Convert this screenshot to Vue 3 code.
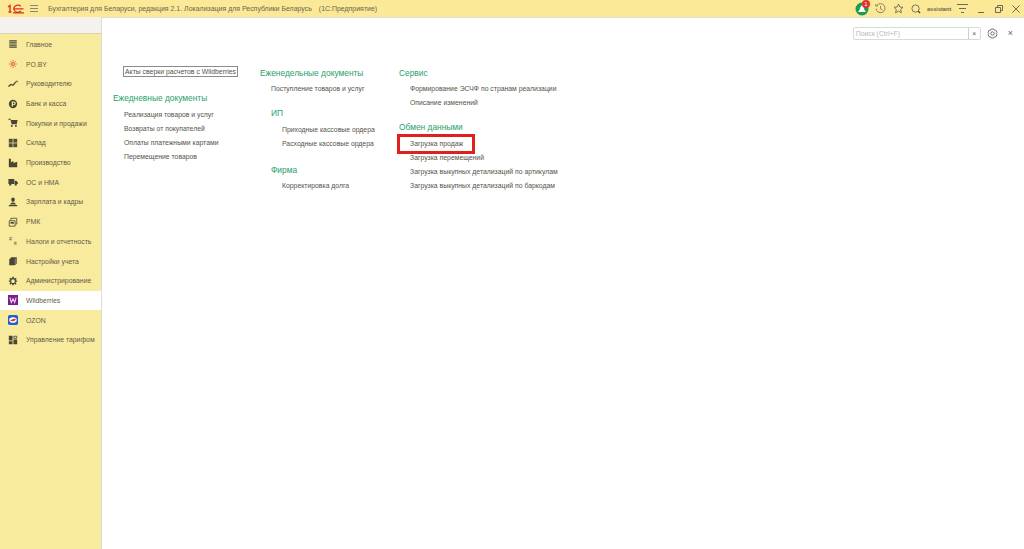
<template>
  <div class="app">
    <header class="topbar">
      <svg class="logo" width="17" height="10" viewBox="0 0 17 10">
        <path d="M1 3 L3 1.5 V8 M1.5 8 H4.5" fill="none" stroke="#d9331f" stroke-width="1.4" />
        <path d="M14 2.4 A4.2 3.4 0 1 0 14 7 M7 4.8 H16.5 M6 8.8 H17" fill="none" stroke="#d9331f" stroke-width="1.2" />
      </svg>
      <svg class="burger" width="8" height="7" viewBox="0 0 8 7">
        <path d="M0 .5H8M0 3.5H8M0 6.5H8" stroke="#8a8570" stroke-width="1" />
      </svg>
      <span class="app-title">Бухгалтерия для Беларуси, редакция 2.1. Локализация для Республики Беларусь</span>
      <span class="app-kind">(1С:Предприятие)</span>
      <div class="top-right">
        <div class="badge-wrap">
          <svg width="14" height="14" viewBox="0 0 14 14">
            <circle cx="7" cy="7" r="6.5" fill="#1f9a4c" />
            <path d="M7 3 L9.5 6.5 H8.6 L11 10 H3 L5.4 6.5 H4.5 Z" fill="#fff" />
          </svg>
          <span class="badge">1</span>
        </div>
        <svg class="t1" width="11" height="11" viewBox="0 0 11 11" fill="none" stroke="#7d7863" stroke-width=".9">
          <path d="M1.8 2.6 A4.5 4.5 0 1 1 1 5.5 M.8 1 V3 H2.8 M5.5 3 V5.8 L7.5 7" />
        </svg>
        <svg class="t2" width="11" height="11" viewBox="0 0 11 11" fill="none" stroke="#6e6955" stroke-width=".9">
          <path d="M5.5 1 L6.9 4 L10 4.3 L7.7 6.5 L8.4 9.8 L5.5 8.1 L2.6 9.8 L3.3 6.5 L1 4.3 L4.1 4 Z" />
        </svg>
        <svg class="t3" width="10" height="10" viewBox="0 0 11 11" fill="none" stroke="#6e6955">
          <circle cx="5" cy="5" r="4" />
          <path d="M8 8 L10 10" stroke-width="1.5" stroke="#4f4b3c" />
        </svg>
        <span class="user">assistant</span>
        <svg class="t4" width="11" height="9" viewBox="0 0 11 9">
          <path d="M0 .5H11M2 4.5H9M4 8.5H7" stroke="#6e6955" />
        </svg>
        <svg class="t5" width="7" height="8" viewBox="0 0 7 8">
          <path d="M0 7.5H6" stroke="#6e6955" />
        </svg>
        <svg class="t6" width="8" height="8" viewBox="0 0 8 8" fill="none" stroke="#6e6955">
          <path d="M.5 2.5H5.5V7.5H.5Z M2.5 2.5V.5H7.5V5.5H5.5" />
        </svg>
        <svg class="t7" width="8" height="8" viewBox="0 0 8 8">
          <path d="M.5 .5L7.5 7.5M7.5 .5L.5 7.5" stroke="#6e6955" />
        </svg>
      </div>
    </header>

    <div class="body">
      <aside class="sidebar">
        <div class="sidebar-top"></div>
        <nav class="nav">
          <div v-for="item in navItems" :key="item.label" class="nav-item" :class="{ active: item.active }">
            <svg class="nav-icon" width="10" height="10" viewBox="0 0 12 12">
              <path v-for="(s, i) in item.shapes" :key="i" :d="s.d" :fill="s.fill || 'none'" :stroke="s.stroke || 'none'" :stroke-width="s.width || 1" />
            </svg>
            <span>{{ item.label }}</span>
          </div>
        </nav>
      </aside>

      <main class="panel">
        <div class="search-row">
          <div class="search">
            <span class="search-text">Поиск (Ctrl+F)</span>
            <span class="search-clear">×</span>
          </div>
          <svg class="gear" width="11" height="11" viewBox="0 0 11 11" fill="none" stroke="#707070" stroke-linejoin="round">
            <path d="M4.3 1 H6.7 L7.4 2.2 L8.8 2.2 L10 4.3 L9.3 5.5 L10 6.7 L8.8 8.8 L7.4 8.8 L6.7 10 H4.3 L3.6 8.8 L2.2 8.8 L1 6.7 L1.7 5.5 L1 4.3 L2.2 2.2 L3.6 2.2 Z" />
            <circle cx="5.5" cy="5.5" r="1.7" />
          </svg>
          <span class="panel-close">×</span>
        </div>

        <div class="columns">
          <section class="col col-1">
            <div class="focus-link">Акты сверки расчетов с Wildberries</div>
            <h3>Ежедневные документы</h3>
            <ul>
              <li>Реализация товаров и услуг</li>
              <li>Возвраты от покупателей</li>
              <li>Оплаты платежными картами</li>
              <li>Перемещение товаров</li>
            </ul>
          </section>

          <section class="col col-2">
            <h3>Еженедельные документы</h3>
            <ul class="flat">
              <li>Поступление товаров и услуг</li>
            </ul>
            <h3 class="sub ip">ИП</h3>
            <ul class="low">
              <li>Приходные кассовые ордера</li>
              <li>Расходные кассовые ордера</li>
            </ul>
            <h3 class="sub firm">Фирма</h3>
            <ul>
              <li>Корректировка долга</li>
            </ul>
          </section>

          <section class="col col-3">
            <h3>Сервис</h3>
            <ul>
              <li>Формирование ЭСЧФ по странам реализации</li>
              <li>Описание изменений</li>
            </ul>
            <h3 class="exchange">Обмен данными</h3>
            <ul class="low">
              <li class="marked">Загрузка продаж</li>
              <li>Загрузка перемещений</li>
              <li>Загрузка выкупных детализаций по артикулам</li>
              <li>Загрузка выкупных детализаций по баркодам</li>
            </ul>
          </section>
        </div>
      </main>
    </div>
  </div>
</template>

<script setup>
const dark = '#4a4636'

const navItems = [
  { label: 'Главное', shapes: [{ d: 'M1.5 1.5H10.5V3H1.5ZM1.5 4H10.5V5.5H1.5ZM1.5 6.5H10.5V8H1.5ZM1.5 9H10.5V10.5H1.5Z', fill: dark }] },
  { label: 'PO.BY', shapes: [{ d: 'M6 1V11M1 6H11M2.5 2.5L9.5 9.5M9.5 2.5L2.5 9.5', stroke: '#e8643a', width: 0.9 }, { d: 'M4.5 6A1.5 1.5 0 1 1 7.5 6A1.5 1.5 0 1 1 4.5 6Z', fill: '#f9eb9d', stroke: '#d9431f', width: 0.8 }] },
  { label: 'Руководителю', shapes: [{ d: 'M.5 9L3.5 6.5L6 7.5L9.5 3.5', stroke: dark, width: 1.5 }, { d: 'M9 2H11.5V4.5Z', fill: dark }] },
  { label: 'Банк и касса', shapes: [{ d: 'M1 6A5 5 0 1 1 11 6A5 5 0 1 1 1 6ZM4.5 3V9H6V7.3H7.2A2.1 2.1 0 0 0 7.2 3Z', fill: dark }, { d: 'M6 4.2H7A1 1 0 0 1 7 6.2H6Z', fill: dark }] },
  { label: 'Покупки и продажи', shapes: [{ d: 'M.5 1H3.2L3.6 2.5H11.5L10.5 7.5H4.3L3 2H.5Z', fill: dark }, { d: 'M3.5 8.5H5.5V10.5H3.5ZM8.5 8.5H10.5V10.5H8.5Z', fill: dark }] },
  { label: 'Склад', shapes: [{ d: 'M1 1H11V11H1Z', fill: dark }, { d: 'M1 6H11M6 1V11', stroke: '#f9eb9d', width: 0.9 }, { d: 'M1 3.5H11M1 8.5H11', stroke: '#8a8468', width: 0.5 }] },
  { label: 'Производство', shapes: [{ d: 'M1 11V1H3.5V5L6.5 3.5V6L11 4.5V11Z', fill: dark }] },
  { label: 'ОС и НМА', shapes: [{ d: 'M.5 2.5H7.5V8.5H.5ZM8 4.5H10L11.8 6.5V8.5H8Z', fill: dark }, { d: 'M1.5 8H4V10.3H1.5ZM8 8H10.5V10.3H8Z', fill: dark }] },
  { label: 'Зарплата и кадры', shapes: [{ d: 'M3.8 3.3A2.2 2.6 0 1 1 8.2 3.3A2.2 2.6 0 1 1 3.8 3.3ZM2 9L4.5 6.5H7.5L10 9ZM1 9.5H11V11H1Z', fill: dark }] },
  { label: 'РМК', shapes: [{ d: 'M1.5 4.5H8.5V11H1.5ZM3.5 4V1.5H10.5V8.5H9', stroke: dark }, { d: 'M3 6H7V8H3Z', fill: dark }] },
  { label: 'Налоги и отчетность', shapes: [{ d: 'M1.5 2H5M3 2V5M1 4.5H5M7 7.5H10.5M8.5 7.5V10M7 9.7H11', stroke: '#6e6a58', width: 0.8 }] },
  { label: 'Настройки учета', shapes: [{ d: 'M1.5 4L4 1.5H10.5V9L8 11H1.5Z', fill: dark }, { d: 'M8 4L10.5 1.5V9L8 11Z', fill: '#7d7860' }] },
  { label: 'Администрирование', shapes: [{ d: 'M5 1H7V2.5L8.3 3L9.4 2L10.5 3.5L9.3 4.5L9.5 5.5H11V7H9.5L9.2 8L10.3 9.2L9 10.4L8 9.3L7 9.6V11H5V9.6L4 9.3L3 10.4L1.7 9.2L2.8 8L2.5 7H1V5.5H2.5L2.7 4.5L1.5 3.5L2.6 2L3.7 3L5 2.5Z', fill: dark }, { d: 'M3.8 6.2A2.2 2.2 0 1 1 8.2 6.2A2.2 2.2 0 1 1 3.8 6.2Z', fill: '#f9eb9d' }] },
  { label: 'Wildberries', active: true, shapes: [{ d: 'M0 0H12V12H0Z', fill: '#7d1b8f' }, { d: 'M2.2 3L4 9L6 4.5L8 9L9.8 3', stroke: '#f3d9f5', width: 1.3 }] },
  { label: 'OZON', shapes: [{ d: 'M2 0H10Q12 0 12 2V10Q12 12 10 12H2Q0 12 0 10V2Q0 0 2 0Z', fill: '#1f5fd0' }, { d: 'M1.5 6A4.5 3.4 0 1 1 10.5 6A4.5 3.4 0 1 1 1.5 6Z', fill: '#fff' }, { d: 'M2.5 7Q6 3.4 9.7 4.8Q8 8.6 2.5 7Z', fill: '#e0322a' }] },
  { label: 'Управление тарифом', shapes: [{ d: 'M1 1H5.5V6.5H1ZM1 7.5H5.5V11H1ZM6.5 5.5H11V11H6.5Z', fill: dark }, { d: 'M7 1.5H10.5V4H7Z', stroke: dark }] }
]
</script>

<style scoped>
.app {
  width: 1024px;
  height: 549px;
  display: flex;
  flex-direction: column;
  overflow: hidden;
  font-family: "Liberation Sans", Arial, sans-serif;
  font-size: 6.85px;
  color: #55534a;
  background: #f9eb9d;
}

.topbar {
  height: 17px;
  flex: none;
  display: flex;
  align-items: center;
  background: #fbe997;
  padding-left: 7px;
}

.logo {
  margin-right: 6px;
}

.burger {
  margin-right: 10px;
}

.app-title {
  color: #6a654f;
  font-size: 6.96px;
  margin-right: 7px;
  white-space: nowrap;
}

.app-kind {
  color: #6a654f;
  font-size: 6.96px;
}

.top-right {
  margin-left: auto;
  display: flex;
  align-items: center;
  padding-right: 4px;
}

.badge-wrap {
  position: relative;
  display: flex;
  margin-right: 5.5px;
}

.badge {
  position: absolute;
  top: -2px;
  right: -1px;
  width: 8px;
  height: 8px;
  border-radius: 50%;
  background: #e0312d;
  color: #fff;
  font-size: 6px;
  line-height: 8px;
  text-align: center;
}

.t1 {
  margin-right: 7px;
}

.t2 {
  margin-right: 7px;
}

.t3 {
  margin-right: 6.5px;
}

.user {
  width: 24px;
  font-size: 5.6px;
  font-weight: bold;
  color: #6a654f;
  margin-right: 5.5px;
}

.t4 {
  margin-right: 10px;
}

.t5 {
  margin-right: 10.5px;
}

.t6 {
  margin-right: 9px;
}

.body {
  flex: 1;
  display: flex;
  min-height: 0;
}

.sidebar {
  width: 101px;
  flex: none;
  display: flex;
  flex-direction: column;
  background: #f9eb9d;
}

.sidebar-top {
  height: 16px;
  flex: none;
  background: #f3f2ec;
  border-bottom: 1px solid #d9d5b4;
}

.nav {
  padding-top: 0.6px;
}

.nav-item {
  height: 19.7px;
  display: flex;
  align-items: center;
  padding-left: 8px;
  color: #5f5b48;
  white-space: nowrap;
}

.nav-item.active {
  background: #fff;
}

.nav-icon {
  margin-right: 8px;
  flex: none;
}

.panel {
  flex: 1;
  background: #fff;
  border-top: 1px solid #dcdcd8;
  border-left: 1px solid #dcdcd8;
  padding: 8px 0 0 11px;
}

.search-row {
  height: 14px;
  display: flex;
  align-items: center;
  justify-content: flex-end;
  padding-right: 11px;
}

.search {
  width: 128px;
  height: 13px;
  box-sizing: border-box;
  display: flex;
  align-items: center;
  justify-content: space-between;
  border: 1px solid #cfe0cf;
  border-radius: 2px;
  padding-left: 2px;
}

.search-text {
  color: #b9b9b9;
}

.search-clear {
  width: 11px;
  height: 11px;
  line-height: 11px;
  text-align: center;
  border-left: 1px solid #d0d0d0;
  color: #555;
}

.gear {
  margin-left: 6px;
}

.panel-close {
  margin-left: 10px;
  color: #666;
  font-size: 9px;
}

.columns {
  display: flex;
  margin-top: 26px;
}

.col-1 {
  width: 147px;
  flex: none;
}

.col-2 {
  width: 139px;
  flex: none;
}

.focus-link {
  display: inline-block;
  margin-left: 10px;
  padding: 0 1px;
  height: 11px;
  line-height: 10px;
  box-sizing: border-box;
  border: 1px solid #8b8b8b;
  white-space: nowrap;
}

h3 {
  margin: 0;
  font-size: 8.4px;
  line-height: 14px;
  font-weight: normal;
  color: #2aa06a;
}

.col-1 h3 {
  margin-top: 14px;
}

.col-1 ul {
  margin-top: 3px;
}

.col-2 h3.ip {
  margin: 10px 0 0 11px;
}

.col-2 h3.firm {
  margin: 12px 0 0 11px;
}

.exchange {
  margin-top: 10px;
}

ul {
  list-style: none;
  margin: 2px 0 0;
  padding: 0 0 0 11px;
}

ul.low {
  margin-top: 3px;
}

.col-2 ul {
  padding-left: 22px;
}

.col-2 ul.flat {
  padding-left: 11px;
}

li {
  height: 14px;
  line-height: 14px;
  white-space: nowrap;
}

.marked {
  position: relative;
}

.marked::after {
  content: "";
  position: absolute;
  left: -13px;
  top: -3px;
  width: 72px;
  height: 14px;
  border: 3px solid #e0201c;
}
</style>
